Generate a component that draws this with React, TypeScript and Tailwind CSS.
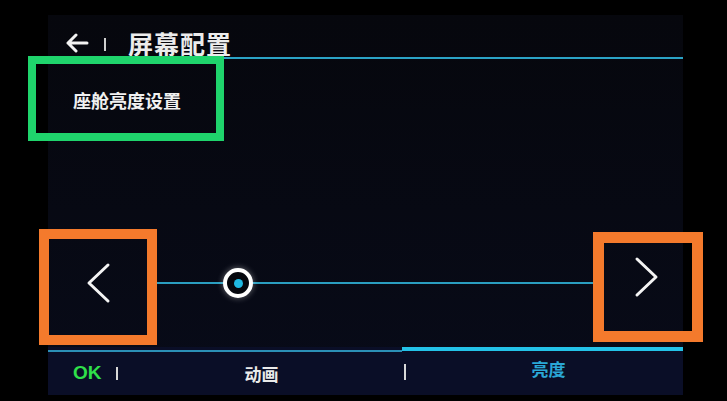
const cjk = { fontFamily: '"Noto Sans CJK SC", "Noto Sans", sans-serif' };

function Chevron({ dir }: { dir: 'left' | 'right' }) {
  return (
    <svg width="28" height="42" viewBox="0 0 28 42" fill="none">
      <polyline
        points={dir === 'left' ? '24,3 5,21 24,39' : '4,3 23,21 4,39'}
        stroke="#f4f4f4"
        strokeWidth="3"
        strokeLinecap="round"
        strokeLinejoin="round"
      />
    </svg>
  );
}

export default function App() {
  return (
    <div className="relative w-[727px] h-[401px] overflow-hidden bg-black pt-[15px] pl-[48px]" style={cjk}>
      <div className="w-[635px] h-[380px] flex flex-col bg-gradient-to-b from-[#06070d] to-[#080b19]">
        {/* header */}
        <div className="h-[42px] flex items-center pl-[17px] pt-[14px] shrink-0">
          <svg width="24" height="20" viewBox="0 0 24 20" fill="none">
            <path d="M22 10H3M11 2L3 10l8 8" stroke="#f2f2f2" strokeWidth="3" strokeLinecap="round" strokeLinejoin="round" />
          </svg>
          <div className="w-[2px] h-[13px] bg-[#cfcfcf] ml-[15px] mt-[3px]" />
          <span className="ml-[22px] text-[25px] leading-none font-semibold text-[#ececec] tracking-[1px]">屏幕配置</span>
        </div>
        <div className="h-[2px] bg-[#2ba3c6] shrink-0" />

        {/* section title */}
        <div className="pl-[25px] mt-[29px] text-[18px] leading-[24px] font-bold text-[#f0f0f0]">座舱亮度设置</div>

        <div className="flex-1" />

        {/* slider */}
        <div className="h-[80px] flex items-center shrink-0">
          <div className="w-[100px] flex justify-center">
            <Chevron dir="left" />
          </div>
          <div className="flex-1 relative flex items-center">
            <div className="h-[2px] w-full bg-[#2a9ec0]" />
            <div className="absolute left-[75px] w-[30px] h-[30px] rounded-full border-[4px] border-white bg-[#05070d] flex items-center justify-center shadow-[0_0_6px_rgba(255,255,255,0.4)]">
              <div className="w-[9px] h-[9px] rounded-full bg-[#1fb9e2]" />
            </div>
          </div>
          <div className="w-[85px] flex pl-[35px] -mt-[12px]">
            <Chevron dir="right" />
          </div>
        </div>

        <div className="h-[24px] shrink-0" />

        {/* bottom tabs */}
        <div className="h-[48px] flex shrink-0 bg-[#0a0e27]">
          <div className="w-[354px] flex items-center pl-[25px] border-t-2 border-[#2b8fb6] mt-[3px]">
            <span className="text-[19px] font-extrabold text-[#2fe04a]" style={{ fontFamily: '"Liberation Sans", sans-serif' }}>OK</span>
            <div className="w-[2px] h-[13px] bg-[#d8d8d8] ml-[14px]" />
            <span className="ml-[127px] text-[17px] font-bold text-[#eaeaea]">动画</span>
          </div>
          <div className="flex-1 flex items-center border-t-4 border-[#24c2e8]">
            <div className="w-[2px] h-[16px] bg-[#d8d8d8] ml-[2px] -mt-[2px]" />
            <span className="flex-1 text-center text-[17px] font-bold text-[#2aa7d6] -mt-[8px] pl-[8px]">亮度</span>
          </div>
        </div>
      </div>

      {/* annotation boxes */}
      <div className="absolute left-[28px] top-[56px] w-[196px] h-[85px] border-[8px] border-[#1fd46c]" />
      <div className="absolute left-[39px] top-[229px] w-[118px] h-[116px] border-[10px] border-[#f47a2c]" />
      <div className="absolute left-[593px] top-[232px] w-[110px] h-[110px] border-[11px] border-[#f47a2c]" />
    </div>
  );
}
